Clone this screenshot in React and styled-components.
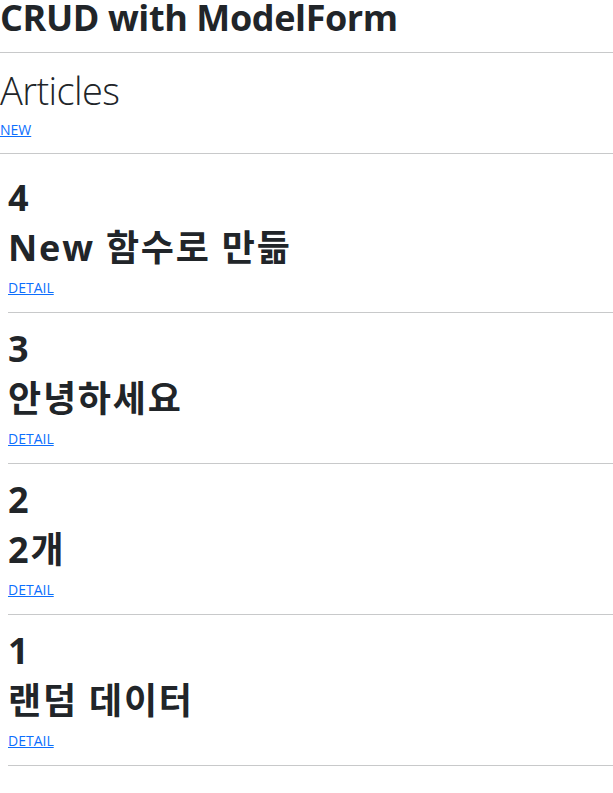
import React from 'react'
import styled, { createGlobalStyle } from 'styled-components'

const GlobalStyle = createGlobalStyle`
    body {
        margin: 0;
        background: #fff;
        color: #212529;
        font-family: "Open Sans", "Noto Sans CJK KR", sans-serif;
    }
`

const Page = styled.div`
    display: flex;
    flex-direction: column;
`

const Title = styled.h1`
    margin: 0;
    padding-top: 1px;
    font-size: 36px;
    font-weight: 700;
    line-height: 33px;
    letter-spacing: -0.4px;
`

const Rule = styled.hr`
    margin: ${({ $top }) => $top}px 0 ${({ $bottom }) => $bottom}px;
    border: 0;
    border-top: 1px solid #c8c9ca;
    height: 0;
`

const Heading = styled.h1`
    margin: 0 0 4px;
    font-size: 38px;
    font-weight: 300;
    line-height: 49px;
    letter-spacing: -0.6px;
`

const LinkLine = styled.div`
    font-size: 14px;
    line-height: 21px;
    margin-top: ${({ $top }) => $top || 0}px;
`

const Link = styled.a`
    color: #0d6efd;
    text-decoration: underline;
    cursor: pointer;
`

const List = styled.div`
    display: flex;
    flex-direction: column;
    padding: 8px 0 0 8px;
`

const Article = styled.div`
    display: flex;
    flex-direction: column;
    padding-top: 14px;
`

const SubTitle = styled.h2`
    margin: ${({ $top }) => $top || 0}px 0 0;
    font-size: 36px;
    font-weight: 700;
    line-height: 43px;
    letter-spacing: ${({ $spaced }) => ($spaced ? '1.8px' : '0')};
`

const articles = [
    { id: 4, title: 'New 함수로 만듦' },
    { id: 3, title: '안녕하세요' },
    { id: 2, title: '2개' },
    { id: 1, title: '랜덤 데이터' },
]

const App = () => {
    return (
        <Page>
            <GlobalStyle />
            <Title>CRUD with ModelForm</Title>
            <Rule $top={18} $bottom={13} />
            <Heading>Articles</Heading>
            <LinkLine>
                <Link>NEW</Link>
            </LinkLine>
            <Rule $top={13} $bottom={0} />
            <List>
                {articles.map((article) => (
                    <Article key={article.id}>
                        <SubTitle>{article.id}</SubTitle>
                        <SubTitle $top={7} $spaced>{article.title}</SubTitle>
                        <LinkLine $top={8}>
                            <Link>DETAIL</Link>
                        </LinkLine>
                        <Rule $top={14} $bottom={0} />
                    </Article>
                ))}
            </List>
        </Page>
    )
}

export default App
